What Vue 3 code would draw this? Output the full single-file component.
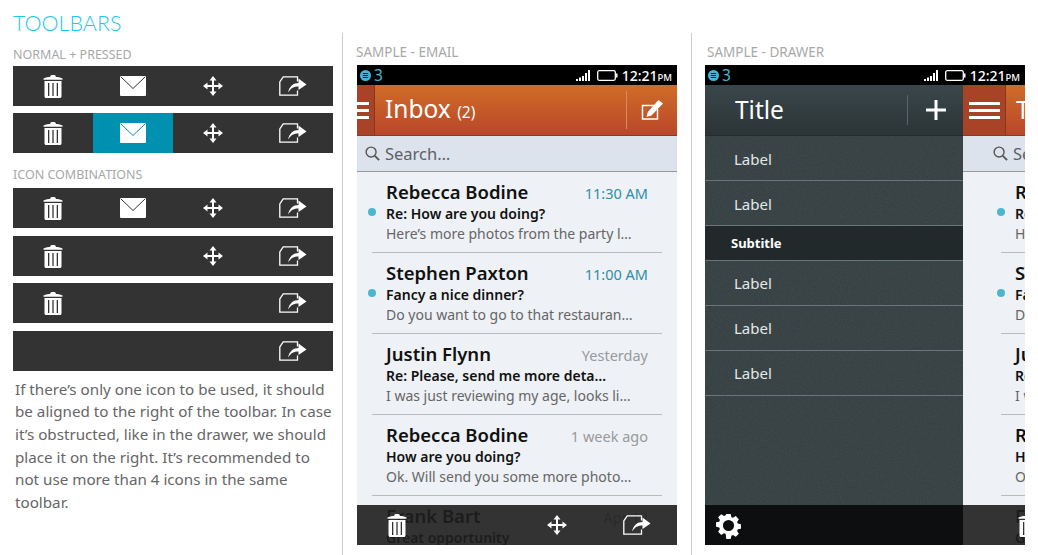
<template>
  <div class="page">
    <svg class="sprites" width="0" height="0" aria-hidden="true">
      <symbol id="trash" viewBox="0 0 20 24">
        <path fill="#fff" d="M.5 4.6C3 3.4 5.5 3 7 3l.6-1.6c1.6-.5 3.2-.5 4.8 0L13 3c1.5 0 4 .4 6.500 1.600V5.800H.5z" />
        <path fill="#fff" fill-rule="evenodd" d="M1.500 7h17v15.500c0 .8-.7 1.500-1.500 1.500H3c-.8 0-1.500-.7-1.500-1.500zM5 9v13h1.300V9zm4.350 0v13h1.300V9zm4.350 0v13H15V9z" />
      </symbol>
      <symbol id="mail" viewBox="0 0 26 20">
        <rect width="26" height="20" rx="1" fill="#fff" />
        <path d="M.8.8 13 12.500 25.200.8" fill="none" stroke="currentColor" stroke-width="1" />
      </symbol>
      <symbol id="move" viewBox="0 0 20 20">
        <path fill="#fff" d="M10 0l3.500 4.500H11V9h4.500V6.500L20 10l-4.500 3.500V11H11v4.500h2.500L10 20l-3.500-4.500H9V11H4.500v2.500L0 10l4.500-3.500V9H9V4.500H6.500z" />
      </symbol>
      <symbol id="share" viewBox="0 0 28 20">
        <path d="M18.500 5.500V.8H4.200L.8 6v13.200h17.700V14.500" fill="none" stroke="#fff" stroke-width="1.300" />
        <path fill="#fff" d="M19.500 2.500l8 6-8 5.500v-3.500c-4.500 0-7.500 1.500-10.500 6 1.500-6.500 5.500-9.500 10.500-9.500z" />
      </symbol>
    </svg>

    <section class="col col-guide">
      <h1>TOOLBARS</h1>
      <h2 class="label first">NORMAL + PRESSED</h2>
      <div class="group">
        <div v-for="(bar, i) in normalBars" :key="i" class="toolbar">
          <span v-for="(icon, j) in bar" :key="j" class="cell" :class="{ pressed: i === 1 && j === 1 }">
            <svg v-if="icon" :class="'ic-' + icon"><use :href="'#' + icon" /></svg>
          </span>
        </div>
      </div>
      <h2 class="label second">ICON COMBINATIONS</h2>
      <div class="group">
        <div v-for="(bar, i) in comboBars" :key="i" class="toolbar">
          <span v-for="(icon, j) in bar" :key="j" class="cell">
            <svg v-if="icon" :class="'ic-' + icon"><use :href="'#' + icon" /></svg>
          </span>
        </div>
      </div>
      <p class="note">If there’s only one icon to be used, it should be aligned to the right of the toolbar. In case it’s obstructed, like in the drawer, we should place it on the right. It’s recommended to not use more than 4 icons in the same toolbar.</p>
    </section>

    <section v-for="view in views" :key="view.name" class="col col-sample" :class="'col-' + view.name">
      <h2 class="label sample">{{ view.title }}</h2>
      <div class="phone" :class="view.name">
        <div class="status">
          <svg class="notif" viewBox="0 0 11 11">
            <circle cx="5.500" cy="5.500" r="5.500" fill="#4cb6d0" />
            <path d="M2.800 3.500h5.400M2.800 5.500h5.400M2.800 7.500h5.400" stroke="#06222b" stroke-width="1" />
          </svg>
          <span class="notif-count">3</span>
          <svg class="signal" viewBox="0 0 15 11">
            <path fill="#fff" d="M0 9h2v2H0zM3 7.500h2V11H3zM6 6h2v5H6zM9 3h2v8H9zM12 0h2v11h-2z" />
          </svg>
          <svg class="battery" viewBox="0 0 21 11">
            <rect x=".7" y=".7" width="17.600" height="9.600" rx="1.500" fill="none" stroke="#fff" stroke-width="1.300" />
            <rect x="19" y="3.500" width="1.500" height="4" fill="#fff" />
          </svg>
          <span class="clock">12:21<small>PM</small></span>
        </div>

        <div class="screen">
          <aside v-if="view.name === 'drawer'" class="drawer-panel">
            <svg class="grain" aria-hidden="true">
              <filter id="grain-noise">
                <feTurbulence type="fractalNoise" baseFrequency="0.9" numOctaves="2" />
                <feColorMatrix values="0 0 0 0 0  0 0 0 0 0  0 0 0 0 0  0 0 0 1.400 -0.300" />
              </filter>
              <rect width="100%" height="100%" filter="url(#grain-noise)" />
            </svg>
            <header class="drawer-head">
              <span class="drawer-title">Title</span>
              <span class="drawer-action">
                <svg class="plus" viewBox="0 0 20 20"><path fill="#fff" d="M8.500 0h3v8.500H20v3h-8.500V20h-3v-8.500H0v-3h8.500z" /></svg>
              </span>
            </header>
            <ul class="drawer-list">
              <li v-for="(item, i) in drawerItems" :key="i" :class="item.kind">{{ item.text }}</li>
            </ul>
            <footer class="drawer-foot">
              <svg class="gear" viewBox="0 0 24 24">
                <path fill="#fff" fill-rule="evenodd" d="M9.700 0h4.600l.7 3.300 1.700.7 2.900-1.800 3.200 3.200-1.800 2.900.7 1.700 3.300.7v4.600l-3.300.7-.7 1.700 1.800 2.900-3.200 3.200-2.900-1.800-1.700.7-.7 3.300H9.700L9 20.700 7.300 20l-2.900 1.800-3.200-3.200L3 15.700 2.300 14-1 13.300V8.700L2.300 8 3 6.300 1.200 3.400l3.200-3.200L7.300 2 9 1.300zM12 6.200a5.800 5.800 0 1 0 0 11.600 5.800 5.800 0 0 0 0-11.600z" />
              </svg>
            </footer>
          </aside>

          <div class="mail">
            <header class="mail-head">
              <span class="tab">
                <i></i><i></i><i></i>
              </span>
              <span v-if="view.name === 'email'" class="mail-title">Inbox <small>(2)</small></span>
              <span v-else class="mail-title">Title</span>
              <span class="mail-action">
                <svg class="compose" viewBox="0 0 22 20">
                  <path d="M15 5.500H1.500v13.500h15V9" fill="none" stroke="#fff" stroke-width="1.500" />
                  <path fill="#fff" d="M17.500 0 22 3.500 10.500 15.500l-5 1.500 1.300-5z" />
                </svg>
              </span>
            </header>
            <div class="search">
              <svg class="lens" viewBox="0 0 16 16">
                <circle cx="6.500" cy="6.500" r="5.300" fill="none" stroke="#555" stroke-width="1.500" />
                <path d="M10.500 10.500 15 15" stroke="#555" stroke-width="2" />
              </svg>
              <span>Search…</span>
            </div>
            <ul class="messages">
              <li v-for="(mail, i) in mails" :key="i" class="message">
                <b v-if="mail.unread" class="dot"></b>
                <div class="top">
                  <span class="sender">{{ mail.from }}</span>
                  <span class="when" :class="{ fresh: mail.unread }">{{ mail.when }}</span>
                </div>
                <div class="subject">{{ mail.subject }}</div>
                <div class="snippet">{{ mail.snippet }}</div>
              </li>
            </ul>
            <div class="toolbar floating">
              <span v-for="(icon, j) in floatingBar" :key="j" class="cell">
                <svg v-if="icon" :class="'ic-' + icon"><use :href="'#' + icon" /></svg>
              </span>
            </div>
          </div>
        </div>
      </div>
    </section>
  </div>
</template>

<script setup>
const normalBars = [
  ['trash', 'mail', 'move', 'share'],
  ['trash', 'mail', 'move', 'share']
]

const comboBars = [
  ['trash', 'mail', 'move', 'share'],
  ['trash', '', 'move', 'share'],
  ['trash', '', '', 'share'],
  ['', '', '', 'share']
]

const floatingBar = ['trash', '', 'move', 'share']

const views = [
  { name: 'email', title: 'SAMPLE - EMAIL' },
  { name: 'drawer', title: 'SAMPLE - DRAWER' }
]

const drawerItems = [
  { text: 'Label', kind: 'row' },
  { text: 'Label', kind: 'row' },
  { text: 'Subtitle', kind: 'sub' },
  { text: 'Label', kind: 'row' },
  { text: 'Label', kind: 'row' },
  { text: 'Label', kind: 'row' }
]

const mails = [
  { from: 'Rebecca Bodine', when: '11:30 AM', subject: 'Re: How are you doing?', snippet: 'Here’s more photos from the party l…', unread: true },
  { from: 'Stephen Paxton', when: '11:00 AM', subject: 'Fancy a nice dinner?', snippet: 'Do you want to go to that restauran…', unread: true },
  { from: 'Justin Flynn', when: 'Yesterday', subject: 'Re: Please, send me more deta…', snippet: 'I was just reviewing my age, looks li…' },
  { from: 'Rebecca Bodine', when: '1 week ago', subject: 'How are you doing?', snippet: 'Ok. Will send you some more photo…' },
  { from: 'Frank Bart', when: 'Apr 12', subject: 'Great opportunity', snippet: '' }
]
</script>

<style>
html,
body {
  overflow: hidden;
  background: #fff;
}
</style>

<style scoped>
.page {
  display: flex;
  height: 555px;
  font-family: "Noto Sans", "Open Sans", sans-serif;
  color: #222;
}

.sprites {
  position: absolute;
}

.col-guide {
  flex: none;
  width: 329px;
  padding-left: 13px;
}

.col-sample {
  flex: none;
  margin-top: 33px;
  border-left: 1px solid #ccc;
}

.col-email {
  width: 334px;
  padding-left: 14px;
}

.col-drawer {
  padding-left: 13px;
}

h1 {
  margin: 0;
  padding-top: 11px;
  font-family: Lato, sans-serif;
  font-size: 21.5px;
  line-height: 24px;
  font-weight: 300;
  color: #1cc8ee;
}

.label {
  margin: 0;
  font-size: 12.5px;
  line-height: 14px;
  font-weight: 400;
  color: #a8a8a8;
}

.label.first {
  margin: 13px 0 3.5px;
}

.label.second {
  margin: 15px 0 6px;
}

.label.sample {
  margin: 12px 0 6px -1px;
  font-size: 13.5px;
}

.col-drawer .label.sample {
  margin-left: 2px;
}

.group {
  display: flex;
  flex-direction: column;
  gap: 7.5px;
}

.toolbar {
  display: grid;
  grid-template-columns: repeat(4, 80px);
  height: 40px;
  width: 320px;
  background: #333;
  color: #333;
}

.cell {
  display: flex;
  align-items: center;
  justify-content: center;
}

.cell.pressed {
  background: #0090b0;
  color: #0090b0;
}

.ic-trash {
  width: 20px;
  height: 24px;
}

.ic-mail {
  width: 26px;
  height: 20px;
}

.ic-move {
  width: 20px;
  height: 20px;
}

.ic-share {
  width: 28px;
  height: 20px;
}

.note {
  margin: 7px 0 0 2px;
  width: 322px;
  font-size: 15.2px;
  line-height: 22.7px;
  color: #666;
}

.phone {
  width: 320px;
  height: 480px;
  overflow: hidden;
  background: #eef1f5;
}

.status {
  display: flex;
  align-items: center;
  height: 20px;
  padding: 0 5px 0 3px;
  background: #000;
  color: #fff;
}

.notif {
  width: 11px;
  height: 11px;
}

.notif-count {
  margin-left: 3px;
  font-size: 15.5px;
  color: #4cb6d0;
}

.signal {
  width: 15px;
  height: 11px;
  margin-left: auto;
}

.battery {
  width: 21px;
  height: 11px;
  margin: 0 4px 0 6px;
}

.clock {
  font-size: 14px;
  font-weight: 500;
}

.clock small {
  font-size: 9.5px;
}

.screen {
  display: flex;
  height: 460px;
}

.mail {
  position: relative;
  flex: none;
  width: 320px;
}

.mail-head {
  display: flex;
  align-items: center;
  height: 51px;
  background: linear-gradient(#d06c27, #b9472a);
  border-bottom: 1px solid #8d3a22;
  box-sizing: border-box;
  color: #fff;
}

.tab {
  display: flex;
  flex: none;
  flex-direction: column;
  justify-content: center;
  gap: 4px;
  width: 43px;
  height: 100%;
  margin-left: -25px;
  padding-left: 6px;
  box-sizing: border-box;
  background: #a94328;
  border-right: 1px solid #86371f;
}

.tab i {
  display: block;
  width: 31px;
  height: 3px;
  background: #fff;
}

.mail-title {
  flex: 1;
  padding-left: 10px;
  font-size: 24.5px;
  line-height: 50px;
  white-space: nowrap;
}

.mail-title small {
  font-size: 15.5px;
}

.mail-action {
  display: flex;
  align-items: center;
  justify-content: center;
  width: 50px;
  height: 38px;
  border-left: 1px solid #d98a5c;
}

.compose {
  width: 22px;
  height: 20px;
}

.search {
  display: flex;
  align-items: center;
  gap: 5px;
  height: 36px;
  padding-left: 8px;
  box-sizing: border-box;
  background: #dde3ec;
  border-bottom: 1px solid #999;
  font-size: 16.5px;
  color: #5c6168;
}

.lens {
  flex: none;
  width: 15px;
  height: 15px;
}

.messages {
  margin: 0;
  padding: 0 15px;
  list-style: none;
}

.message {
  position: relative;
  height: 81px;
  padding: 8px 0 0 14px;
  box-sizing: border-box;
  border-bottom: 1px solid #bbb;
  white-space: nowrap;
}

.dot {
  position: absolute;
  top: 36px;
  left: -4px;
  width: 8px;
  height: 8px;
  border-radius: 50%;
  background: #4cb6d0;
}

.top {
  display: flex;
  justify-content: space-between;
  align-items: center;
  height: 22px;
  padding-right: 14px;
}

.sender {
  font-size: 18.5px;
  font-weight: 600;
  color: #111;
}

.when {
  padding-top: 3px;
  font-size: 14.500px;
  color: #999;
}

.when.fresh {
  color: #2e8ea5;
}

.subject {
  margin-top: 3px;
  font-size: 14px;
  line-height: 18px;
  font-weight: 600;
  color: #111;
}

.snippet {
  margin-top: 2px;
  font-size: 14px;
  line-height: 18px;
  color: #666;
}

.floating {
  position: absolute;
  left: 0;
  bottom: 0;
  background: rgba(30, 30, 30, 0.9);
}

.drawer .tab {
  margin-left: 0;
}

.drawer .search {
  padding-left: 30px;
}

.drawer .messages {
  padding-left: 38px;
}

.drawer .floating {
  padding-left: 25px;
}

.drawer-panel {
  position: relative;
  flex: none;
  display: flex;
  flex-direction: column;
  width: 258px;
  background: #3e494c;
  color: #fff;
}

.grain {
  position: absolute;
  top: 0;
  left: 0;
  width: 100%;
  height: 100%;
  opacity: 0.16;
}

.drawer-head,
.drawer-list,
.drawer-foot {
  position: relative;
}

.drawer-head {
  display: flex;
  flex: none;
  align-items: center;
  height: 51px;
  box-sizing: border-box;
  background: linear-gradient(#3a474a, #2b3437);
  border-bottom: 1px solid #252c2e;
}

.drawer-title {
  flex: 1;
  padding-left: 30px;
  font-size: 24.5px;
  line-height: 50px;
}

.drawer-action {
  display: flex;
  align-items: center;
  justify-content: center;
  width: 55px;
  height: 30px;
  border-left: 1px solid #59656a;
}

.plus {
  width: 20px;
  height: 20px;
}

.drawer-list {
  flex: 1;
  margin: 0;
  padding: 0;
  list-style: none;
}

.drawer-list .row {
  height: 45px;
  padding-left: 29px;
  box-sizing: border-box;
  border-bottom: 1px solid #6a7679;
  font-size: 15px;
  line-height: 44px;
  color: #e4e8e8;
}

.drawer-list .row:nth-child(-n + 2) {
  line-height: 46px;
}

.drawer-list .sub {
  height: 35px;
  padding-left: 26px;
  box-sizing: border-box;
  background: #22292b;
  border-bottom: 1px solid #6a7679;
  font-size: 13px;
  font-weight: 700;
  line-height: 34px;
}

.drawer-foot {
  display: flex;
  flex: none;
  align-items: center;
  height: 40px;
  padding-left: 12px;
  background: #0c0e0f;
}

.gear {
  width: 23px;
  height: 23px;
  overflow: visible;
}
</style>
